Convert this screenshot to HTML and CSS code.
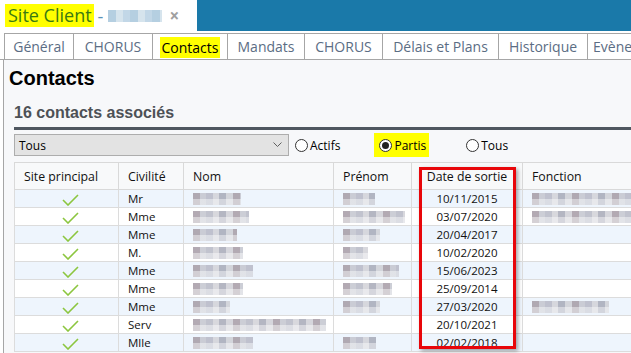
FILE: index.html
```html
<!DOCTYPE html>
<html lang="fr">
<head>
<meta charset="utf-8">
<title>Site Client</title>
<link rel="stylesheet" href="styles.css">
</head>
<body>
<div class="titlebar">
  <div class="title-left">
    <span class="title-hl">Site Client</span>
    <span class="title-dash">-</span>
    <span class="blur title-blur"></span>
    <span class="close">×</span>
  </div>
  <div class="title-right"></div>
</div>
<div class="tabs">
  <div class="tab t1">Général</div>
  <div class="tab t2">CHORUS</div>
  <div class="tab t3 active"><span class="hl">Contacts</span></div>
  <div class="tab t4">Mandats</div>
  <div class="tab t5">CHORUS</div>
  <div class="tab t6">Délais et Plans</div>
  <div class="tab t7">Historique</div>
  <div class="tab t8">Evènements</div>
</div>
<div class="content">
  <h1 class="heading">Contacts</h1>
  <div class="section">
    <h2 class="subheading">16 contacts associés</h2>
    <div class="filters">
      <div class="select"><span>Tous</span>
        <svg class="chev" width="9" height="6" viewBox="0 0 9 6"><path d="M0.5 0.5 L4.5 4.5 L8.5 0.5" fill="none" stroke="#606060" stroke-width="1"/></svg>
      </div>
      <label class="radio r-actifs"><span class="dot"></span>Actifs</label>
      <label class="radio r-partis"><span class="dot on"></span>Partis</label>
      <label class="radio r-tous"><span class="dot"></span>Tous</label>
    </div>
    <div class="grid-wrap">
      <table class="grid">
        <colgroup>
          <col class="c1"><col class="c2"><col class="c3"><col class="c4"><col class="c5"><col class="c6">
        </colgroup>
        <thead>
          <tr><th class="left">Site principal</th><th>Civilité</th><th>Nom</th><th>Prénom</th><th class="center">Date de sortie</th><th>Fonction</th></tr>
        </thead>
        <tbody>
          <tr><td class="center"><svg class="check" width="17" height="12" viewBox="0 0 17 12"><path d="M1 6 L6 11 L16 1" fill="none" stroke="#8cc63f" stroke-width="1.6"/></svg></td><td>Mr</td><td><span class="blur" style="width:48px"></span></td><td><span class="blur" style="width:32px"></span></td><td class="center">10/11/2015</td><td><span class="blur" style="width:110px"></span></td></tr>
          <tr><td class="center"><svg class="check" width="17" height="12" viewBox="0 0 17 12"><path d="M1 6 L6 11 L16 1" fill="none" stroke="#8cc63f" stroke-width="1.6"/></svg></td><td>Mme</td><td><span class="blur" style="width:56px"></span></td><td><span class="blur" style="width:62px"></span></td><td class="center">03/07/2020</td><td><span class="blur" style="width:110px"></span></td></tr>
          <tr><td class="center"><svg class="check" width="17" height="12" viewBox="0 0 17 12"><path d="M1 6 L6 11 L16 1" fill="none" stroke="#8cc63f" stroke-width="1.6"/></svg></td><td>Mme</td><td><span class="blur" style="width:44px"></span></td><td><span class="blur" style="width:37px"></span></td><td class="center">20/04/2017</td><td></td></tr>
          <tr><td class="center"><svg class="check" width="17" height="12" viewBox="0 0 17 12"><path d="M1 6 L6 11 L16 1" fill="none" stroke="#8cc63f" stroke-width="1.6"/></svg></td><td>M.</td><td><span class="blur" style="width:50px"></span></td><td><span class="blur" style="width:25px"></span></td><td class="center">10/02/2020</td><td></td></tr>
          <tr><td class="center"><svg class="check" width="17" height="12" viewBox="0 0 17 12"><path d="M1 6 L6 11 L16 1" fill="none" stroke="#8cc63f" stroke-width="1.6"/></svg></td><td>Mme</td><td><span class="blur" style="width:60px"></span></td><td><span class="blur" style="width:56px"></span></td><td class="center">15/06/2023</td><td></td></tr>
          <tr><td class="center"><svg class="check" width="17" height="12" viewBox="0 0 17 12"><path d="M1 6 L6 11 L16 1" fill="none" stroke="#8cc63f" stroke-width="1.6"/></svg></td><td>Mme</td><td><span class="blur" style="width:50px"></span></td><td><span class="blur" style="width:49px"></span></td><td class="center">25/09/2014</td><td></td></tr>
          <tr><td class="center"><svg class="check" width="17" height="12" viewBox="0 0 17 12"><path d="M1 6 L6 11 L16 1" fill="none" stroke="#8cc63f" stroke-width="1.6"/></svg></td><td>Mme</td><td><span class="blur" style="width:37px"></span></td><td><span class="blur" style="width:37px"></span></td><td class="center">27/03/2020</td><td><span class="blur" style="width:77px"></span></td></tr>
          <tr><td class="center"><svg class="check" width="17" height="12" viewBox="0 0 17 12"><path d="M1 6 L6 11 L16 1" fill="none" stroke="#8cc63f" stroke-width="1.6"/></svg></td><td>Serv</td><td><span class="blur" style="width:133px"></span></td><td></td><td class="center">20/10/2021</td><td></td></tr>
          <tr><td class="center"><svg class="check" width="17" height="12" viewBox="0 0 17 12"><path d="M1 6 L6 11 L16 1" fill="none" stroke="#8cc63f" stroke-width="1.6"/></svg></td><td>Mlle</td><td><span class="blur" style="width:60px"></span></td><td><span class="blur" style="width:33px"></span></td><td class="center">02/02/2018</td><td></td></tr>
        </tbody>
      </table>
      <div class="redbox"></div>
    </div>
  </div>
</div>
</body>
</html>
```
FILE: styles.css
```css
* { box-sizing: border-box; }
html, body { margin: 0; padding: 0; }
body {
  width: 631px;
  height: 353px;
  overflow: hidden;
  background: #ffffff;
  font-family: "Open Sans", "Noto Sans", sans-serif;
  color: #000;
}

.titlebar { display: flex; height: 31px; }
.title-left {
  width: 197px;
  display: flex;
  align-items: center;
  padding-left: 5px;
  background: #fff;
}
.title-hl {
  background: #ffff00;
  color: #3a7a12;
  font-size: 18px;
  line-height: 23px;
  padding: 0 2px 0 3px;
}
.title-dash { color: #5a8fb5; font-size: 18px; margin: 0 5px 0 4px; }
.title-blur { width: 54px; height: 14px; opacity: 0.45; }
.close { color: #a0a0a0; font-size: 17px; font-weight: bold; margin-left: 7px; line-height: 1; }
.title-right { flex: 1; background: #1a79a9; }

.tabs {
  display: flex;
  margin-top: 2px;
  height: 27px;
  padding-left: 4px;
  border-bottom: 1px solid #a6a6a6;
  background: #fff;
  overflow: hidden;
}
.tab {
  border: 1px solid #a6a6a6;
  border-bottom: none;
  margin-left: -1px;
  height: 26px;
  display: flex;
  align-items: center;
  justify-content: center;
  font-size: 14px;
  color: #5b6d84;
  white-space: nowrap;
  flex-shrink: 0;
}
.tab:first-child { margin-left: 0; }
.t1 { width: 70px; }
.t2 { width: 80px; }
.t3 { width: 76px; }
.t4 { width: 78px; }
.t5 { width: 79px; }
.t6 { width: 117px; }
.t7 { width: 90px; }
.t8 { width: 46px; justify-content: flex-start; padding-left: 5px; overflow: hidden; border-right: none; }
.tab.active { color: #000; height: 27px; background: #fff; }
.hl { background: #ffff00; padding: 1px 2px; }

.content {
  margin-left: 3px;
  border-left: 1px solid #a6a6a6;
  background: #f7f8fa;
  height: 300px;
  padding: 6px 0 0 5px;
}
.heading {
  margin: 0;
  font-family: "Liberation Sans", Arial, sans-serif;
  font-weight: bold;
  font-size: 20px;
  line-height: 24px;
}
.section { padding: 13px 0 0 5px; }
.subheading {
  margin: 0;
  font-family: "Liberation Sans", Arial, sans-serif;
  font-weight: bold;
  font-size: 16px;
  line-height: 19px;
  color: #4d5156;
  padding-bottom: 5px;
  border-bottom: 3px solid #4f5760;
}
.filters {
  display: flex;
  align-items: center;
  margin-top: 4px;
  height: 22px;
}
.select {
  width: 275px;
  height: 22px;
  border: 1px solid #adadad;
  background: #e3e3e3;
  display: flex;
  align-items: center;
  justify-content: space-between;
  padding: 0 6px 0 4px;
  font-size: 12px;
}
.radio {
  display: flex;
  align-items: center;
  font-size: 12px;
  height: 24px;
}
.dot {
  width: 13px;
  height: 13px;
  border: 1px solid #333;
  border-radius: 50%;
  margin-right: 2px;
  display: flex;
  align-items: center;
  justify-content: center;
  background: #fff;
}
.dot.on::after {
  content: "";
  width: 7px;
  height: 7px;
  border-radius: 50%;
  background: #222;
}
.r-actifs { margin-left: 6px; }
.r-partis { margin-left: 34px; background: #ffff00; padding: 0 3px 0 5px; }
.r-tous { margin-left: 37px; }

.grid-wrap { position: relative; margin-top: 6px; width: 640px; }
.grid {
  border-collapse: collapse;
  table-layout: fixed;
  width: 640px;
  font-size: 11.5px;
  background: #fff;
  color: #111;
}
.c1 { width: 104px; }
.c2 { width: 65px; }
.c3 { width: 150px; }
.c4 { width: 78px; }
.c5 { width: 111px; }
.c6 { width: 132px; }
.grid th {
  height: 27px;
  font-weight: normal;
  text-align: left;
  padding: 0 9px;
  font-size: 12.3px;
  background: #f8f9fa;
  border: 1px solid #d9d9d9;
  white-space: nowrap;
}
.grid th.left { padding-left: 9px; }
.grid td {
  height: 18px;
  padding: 0 9px;
  border: 1px solid #dcdcdc;
  white-space: nowrap;
  overflow: hidden;
  line-height: 16px;
}
.grid tbody tr:nth-child(odd) td { background: #eef5fd; }
.grid .center { text-align: center; }
.check { display: block; margin: 2px auto 0; position: relative; left: 4px; }

.blur {
  display: inline-block;
  height: 12px;
  vertical-align: middle;
  background-image:
    linear-gradient(180deg, rgba(255,255,255,0) 0 50%, rgba(255,255,255,0.45) 50% 100%),
    repeating-linear-gradient(90deg, #a69ca6 0 7px, #c4c6cf 7px 13px, #b7b9c6 13px 20px, #d2d2d8 20px 26px, #a7aab8 26px 33px, #cfd0d6 33px 40px);
  filter: blur(0.7px);
  opacity: 0.85;
}
.title-blur {
  background-image: repeating-linear-gradient(90deg, #a9c7dc 0 8px, #cfe0ea 8px 15px, #b8d1e3 15px 22px);
}

.redbox {
  position: absolute;
  left: 405px;
  top: 5px;
  width: 97px;
  height: 182px;
  border: 3px solid #e8060a;
  box-shadow: 2px 2px 4px rgba(0,0,0,0.35);
  pointer-events: none;
}
```
